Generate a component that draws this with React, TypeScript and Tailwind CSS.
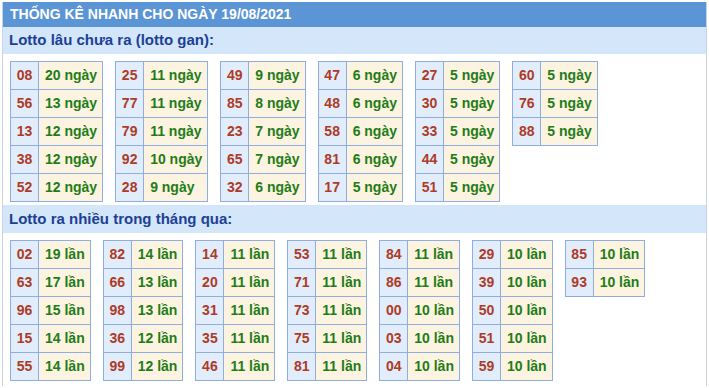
import React from "react";

type Row = [string, string];

const gan: Row[][] = [
  [["08", "20 ngày"], ["56", "13 ngày"], ["13", "12 ngày"], ["38", "12 ngày"], ["52", "12 ngày"]],
  [["25", "11 ngày"], ["77", "11 ngày"], ["79", "11 ngày"], ["92", "10 ngày"], ["28", "9 ngày"]],
  [["49", "9 ngày"], ["85", "8 ngày"], ["23", "7 ngày"], ["65", "7 ngày"], ["32", "6 ngày"]],
  [["47", "6 ngày"], ["48", "6 ngày"], ["58", "6 ngày"], ["81", "6 ngày"], ["17", "5 ngày"]],
  [["27", "5 ngày"], ["30", "5 ngày"], ["33", "5 ngày"], ["44", "5 ngày"], ["51", "5 ngày"]],
  [["60", "5 ngày"], ["76", "5 ngày"], ["88", "5 ngày"]],
];

const nhieu: Row[][] = [
  [["02", "19 lần"], ["63", "17 lần"], ["96", "15 lần"], ["15", "14 lần"], ["55", "14 lần"]],
  [["82", "14 lần"], ["66", "13 lần"], ["98", "13 lần"], ["36", "12 lần"], ["99", "12 lần"]],
  [["14", "11 lần"], ["20", "11 lần"], ["31", "11 lần"], ["35", "11 lần"], ["46", "11 lần"]],
  [["53", "11 lần"], ["71", "11 lần"], ["73", "11 lần"], ["75", "11 lần"], ["81", "11 lần"]],
  [["84", "11 lần"], ["86", "11 lần"], ["00", "10 lần"], ["03", "10 lần"], ["04", "10 lần"]],
  [["29", "10 lần"], ["39", "10 lần"], ["50", "10 lần"], ["51", "10 lần"], ["59", "10 lần"]],
  [["85", "10 lần"], ["93", "10 lần"]],
];

function Table({ rows }: { rows: Row[] }) {
  return (
    <div className="grid grid-cols-[28px_auto] border-l border-t border-[#8eaee2] shrink-0">
      {rows.map(([n, v], i) => (
        <React.Fragment key={i}>
          <div className="h-[28px] border-r border-b border-[#8eaee2] bg-[#e2edfb] flex items-center justify-center text-[#ad3b27]">
            {n}
          </div>
          <div className="h-[28px] border-r border-b border-[#8eaee2] bg-[#fdf3e1] flex items-center pl-[6px] pr-[5px] text-[#1f7d18] whitespace-nowrap">
            {v}
          </div>
        </React.Fragment>
      ))}
    </div>
  );
}

export default function App() {
  return (
    <div
      className="w-[709px] h-[388px] bg-white overflow-hidden"
      style={{ fontFamily: '"Liberation Sans", Arial, sans-serif' }}
    >
      <div className="ml-[2px] mt-[2px] w-[705px] h-[384px] border-x border-[#c9d3de] font-bold text-[14px]">
        <div className="h-[25px] bg-[#5b95d5] text-white flex items-center pl-[7px] text-[14px]">
          THỐNG KÊ NHANH CHO NGÀY 19/08/2021
        </div>
        <div className="h-[27px] bg-[#d3e6fa] text-[#1d3f94] flex items-center pl-[6px] text-[15px]">
          Lotto lâu chưa ra (lotto gan):
        </div>
        <div className="mt-[7px] pl-[7px] flex items-start gap-[12px]">
          {gan.map((t, i) => (
            <Table key={i} rows={t} />
          ))}
        </div>
        <div className="mt-[3px] h-[28px] bg-[#d3e6fa] text-[#1d3f94] flex items-center pl-[6px] text-[15px]">
          Lotto ra nhiều trong tháng qua:
        </div>
        <div className="mt-[7px] pl-[7px] flex items-start gap-[12px]">
          {nhieu.map((t, i) => (
            <Table key={i} rows={t} />
          ))}
        </div>
      </div>
    </div>
  );
}
